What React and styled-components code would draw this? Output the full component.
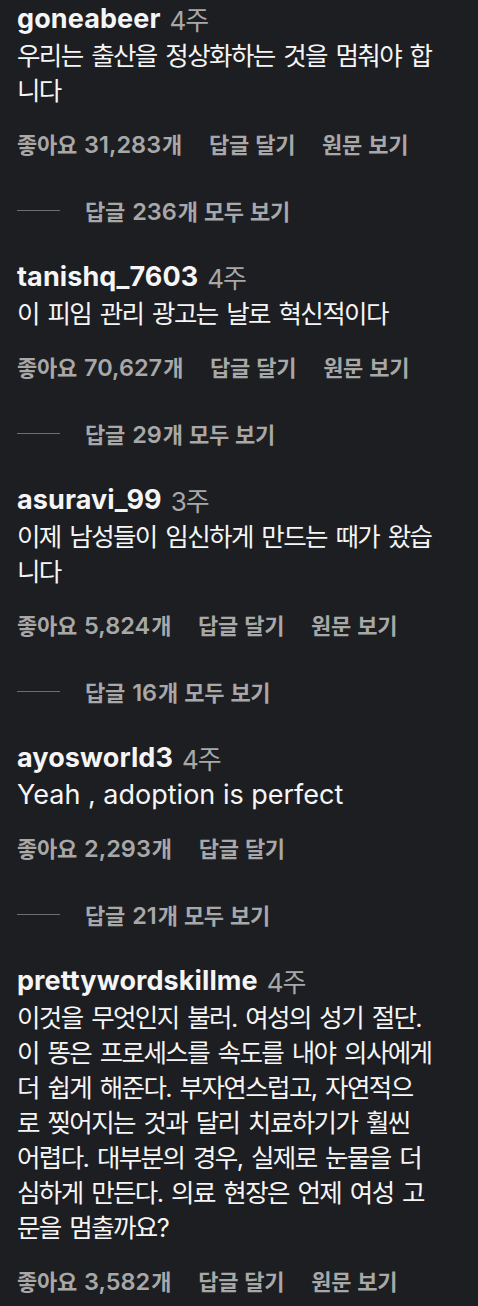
import React from "react";
import styled, { createGlobalStyle } from "styled-components";

const GlobalStyle = createGlobalStyle`
  html, body {
    margin: 0;
    padding: 0;
    background: #1d1e22;
  }
  body {
    font-family: "Inter", "Noto Sans CJK KR", sans-serif;
    color: #f5f5f5;
    -webkit-font-smoothing: antialiased;
  }
`;

const Feed = styled.div`
  display: flex;
  flex-direction: column;
  gap: 34px;
  padding: 0 10px 0 17px;
  min-height: 1306px;
  box-sizing: border-box;
`;

const Comment = styled.div`
  display: flex;
  flex-direction: column;
`;

const Header = styled.div`
  display: flex;
  align-items: center;
  gap: 9px;
  height: 36px;
  white-space: nowrap;
`;

const Username = styled.span`
  font-size: 27px;
  font-weight: 700;
  letter-spacing: 0.1px;
`;

const Time = styled.span`
  font-size: 26px;
  font-weight: 400;
  color: #a8a8a8;
  letter-spacing: -1px;
`;

const Body = styled.div`
  margin-top: 2px;
`;

const Line = styled.div`
  height: 35px;
  line-height: 35px;
  white-space: nowrap;
  font-size: ${({ $latin }) => ($latin ? "27px" : "25.5px")};
  letter-spacing: ${({ $latin }) => ($latin ? "0" : "-1.6px")};
  word-spacing: ${({ $latin }) => ($latin ? "0" : "3px")};
`;

const Actions = styled.div`
  display: flex;
  align-items: center;
  gap: 27px;
  height: 28px;
  margin-top: 21px;
  color: #a8a8a8;
  font-size: 22px;
  font-weight: 600;
  letter-spacing: -0.3px;
  word-spacing: 1px;
  white-space: nowrap;
`;

const Count = styled.span`
  font-size: 23.5px;
  letter-spacing: 0;
  margin: 0 1px;
`;

const Replies = styled.div`
  display: flex;
  align-items: center;
  gap: 25px;
  height: 28px;
  margin-top: 39px;
  color: #a8a8a8;
  font-size: 22px;
  font-weight: 600;
  letter-spacing: -0.3px;
  word-spacing: 1px;
  white-space: nowrap;
`;

const Rule = styled.span`
  width: 43px;
  height: 1px;
  background: #6e6e72;
`;

const comments = [
  {
    user: "goneabeer",
    time: "4주",
    lines: ["우리는 출산을 정상화하는 것을 멈춰야 합", "니다"],
    likes: "31,283",
    translate: true,
    replies: "236",
  },
  {
    user: "tanishq_7603",
    time: "4주",
    lines: ["이 피임 관리 광고는 날로 혁신적이다"],
    likes: "70,627",
    translate: true,
    replies: "29",
  },
  {
    user: "asuravi_99",
    time: "3주",
    lines: ["이제 남성들이 임신하게 만드는 때가 왔습", "니다"],
    likes: "5,824",
    translate: true,
    replies: "16",
  },
  {
    user: "ayosworld3",
    time: "4주",
    lines: ["Yeah , adoption is perfect"],
    latin: true,
    likes: "2,293",
    translate: false,
    replies: "21",
  },
  {
    user: "prettywordskillme",
    time: "4주",
    lines: [
      "이것을 무엇인지 불러. 여성의 성기 절단.",
      "이 똥은 프로세스를 속도를 내야 의사에게",
      "더 쉽게 해준다. 부자연스럽고, 자연적으",
      "로 찢어지는 것과 달리 치료하기가 훨씬",
      "어렵다. 대부분의 경우, 실제로 눈물을 더",
      "심하게 만든다. 의료 현장은 언제 여성 고",
      "문을 멈출까요?",
    ],
    likes: "3,582",
    translate: true,
  },
];

const App = () => {
  return (
    <>
      <GlobalStyle />
      <Feed>
        {comments.map((c) => (
          <Comment key={c.user}>
            <Header>
              <Username>{c.user}</Username>
              <Time>{c.time}</Time>
            </Header>
            <Body>
              {c.lines.map((line, i) => (
                <Line key={i} $latin={c.latin}>
                  {line}
                </Line>
              ))}
            </Body>
            <Actions>
              <span>
                좋아요 <Count>{c.likes}</Count>개
              </span>
              <span>답글 달기</span>
              {c.translate && <span>원문 보기</span>}
            </Actions>
            {c.replies && (
              <Replies>
                <Rule />
                <span>
                  답글 <Count>{c.replies}</Count>개 모두 보기
                </span>
              </Replies>
            )}
          </Comment>
        ))}
      </Feed>
    </>
  );
};

export default App;
